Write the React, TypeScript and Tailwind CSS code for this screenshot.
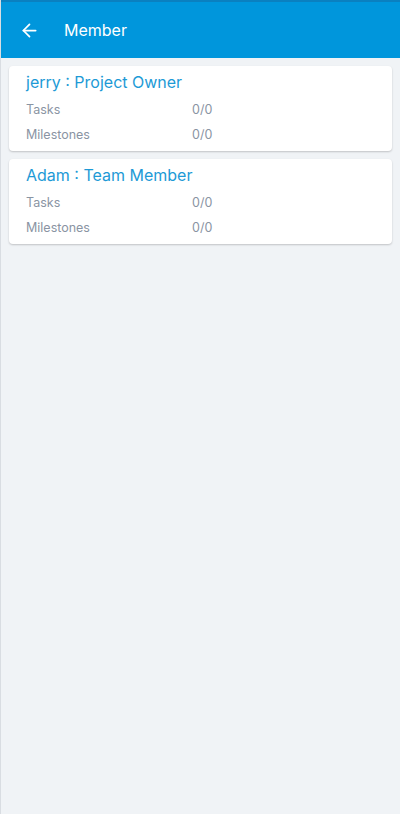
import { ArrowLeft } from "lucide-react";

const members = [
  { name: "jerry", role: "Project Owner", tasks: "0/0", milestones: "0/0" },
  { name: "Adam", role: "Team Member", tasks: "0/0", milestones: "0/0" },
];

const App = () => {
  return (
    <div
      className="flex h-[814px] w-[400px] flex-col overflow-hidden border-l border-[#d9dde2] bg-[#f0f3f6]"
      style={{ fontFamily: "Inter, 'Noto Sans', sans-serif" }}
    >
      <header className="flex h-[58px] shrink-0 items-center gap-[24px] border-t-2 border-[#0a80c0] bg-[#0096dc] px-[18px] text-white">
        <ArrowLeft size={21} strokeWidth={2} />
        <span className="text-[16px]">Member</span>
      </header>

      <div className="flex flex-col gap-[8px] px-[8px] pt-[8px]">
        {members.map((m) => (
          <div
            key={m.name}
            className="rounded-[4px] bg-white px-[17px] pb-[3px] pt-[4px] shadow-[0_1px_2px_rgba(0,0,0,0.2)]"
          >
            <div className="text-[16px] leading-[24px] text-[#1d9ad6]">
              {m.name} : {m.role}
            </div>
            <div className="mt-[4px] flex h-[25px] items-center text-[12.5px] text-[#8a94a3]">
              <span className="w-[166px]">Tasks</span>
              <span>{m.tasks}</span>
            </div>
            <div className="flex h-[25px] items-center text-[12.5px] text-[#8a94a3]">
              <span className="w-[166px]">Milestones</span>
              <span>{m.milestones}</span>
            </div>
          </div>
        ))}
      </div>
    </div>
  );
};

export default App;
